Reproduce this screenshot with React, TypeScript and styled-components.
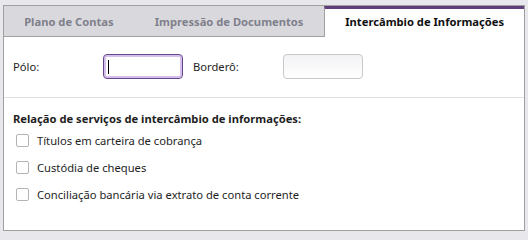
import styled, { createGlobalStyle } from "styled-components";

const GlobalStyle = createGlobalStyle`
    html, body {
        margin: 0;
        padding: 0;
        background: #e8e8ec;
        font-family: "Noto Sans", "Open Sans", sans-serif;
        font-size: 11.2px;
        color: #1e1e1e;
    }
`;

const Page = styled.div`
    padding: 5px 3px 6px 3px;
`;

const Panel = styled.div`
    width: 520px;
    height: 224px;
    border: 1px solid #a0a0a0;
    background: #ffffff;
    display: flex;
    flex-direction: column;
`;

const TabStrip = styled.div`
    display: flex;
    height: 30px;
    background: #d9d9dd;
    border-bottom: 1px solid #a0a0a0;
`;

const Tab = styled.div<{ $active?: boolean; $width: number }>`
    width: ${(p) => p.$width}px;
    box-sizing: border-box;
    display: flex;
    align-items: center;
    justify-content: center;
    font-weight: 700;
    font-size: 11.2px;
    color: ${(p) => (p.$active ? "#111111" : "#80808c")};
    background: ${(p) => (p.$active ? "#ffffff" : "transparent")};
    border-top: 3px solid ${(p) => (p.$active ? "#5e3f7c" : "transparent")};
    border-left: ${(p) => (p.$active ? "1px solid #a0a0a0" : "none")};
    margin-bottom: ${(p) => (p.$active ? "-1px" : "0")};
    height: ${(p) => (p.$active ? "31px" : "30px")};
    padding-bottom: 3px;
`;

const FieldRow = styled.div`
    display: flex;
    align-items: center;
    padding: 17px 9px 18px 9px;
    border-bottom: 1px solid #e2e2e6;
`;

const FieldLabel = styled.label<{ $width: number }>`
    width: ${(p) => p.$width}px;
`;

const InputWrap = styled.div`
    position: relative;
    margin-right: 10px;
`;

const TextInput = styled.input<{ $focused?: boolean }>`
    display: block;
    width: 80px;
    height: 25px;
    box-sizing: border-box;
    border-radius: 4px;
    font: inherit;
    outline: none;
    padding: 0 4px;
    border: 1px solid ${(p) => (p.$focused ? "#65478a" : "#c8c8cc")};
    box-shadow: ${(p) => (p.$focused ? "inset 0 0 0 2px #d4c0ea" : "none")};
    background: ${(p) => (p.$focused ? "#ffffff" : "linear-gradient(#f3f3f5, #ffffff)")};
`;

const Caret = styled.span`
    position: absolute;
    left: 5px;
    top: 6px;
    width: 1px;
    height: 14px;
    background: #000000;
`;

const Section = styled.div`
    padding: 11px 9px 0 9px;
`;

const SectionTitle = styled.div`
    font-weight: 700;
    height: 20px;
    line-height: 20px;
`;

const CheckList = styled.div`
    display: flex;
    flex-direction: column;
    gap: 11px;
    padding-top: 3px;
`;

const CheckRow = styled.label`
    display: flex;
    align-items: center;
    height: 16px;
    padding-left: 3px;
`;

const Box = styled.span`
    width: 13px;
    height: 13px;
    box-sizing: border-box;
    border: 1px solid #b4b4b8;
    border-radius: 2px;
    background: #ffffff;
    margin-right: 8px;
`;

export default function App() {
    const services = [
        "Títulos em carteira de cobrança",
        "Custódia de cheques",
        "Conciliação bancária via extrato de conta corrente",
    ];
    return (
        <>
            <GlobalStyle/>
            <Page>
                <Panel>
                    <TabStrip>
                        <Tab $width={130}>Plano de Contas</Tab>
                        <Tab $width={191}>Impressão de Documentos</Tab>
                        <Tab $width={200} $active>Intercâmbio de Informações</Tab>
                    </TabStrip>
                    <FieldRow>
                        <FieldLabel $width={90}>Pólo:</FieldLabel>
                        <InputWrap>
                            <TextInput $focused/>
                            <Caret/>
                        </InputWrap>
                        <FieldLabel $width={90}>Borderô:</FieldLabel>
                        <InputWrap>
                            <TextInput/>
                        </InputWrap>
                    </FieldRow>
                    <Section>
                        <SectionTitle>Relação de serviços de intercâmbio de informações:</SectionTitle>
                        <CheckList>
                            {services.map((s) => (
                                <CheckRow key={s}>
                                    <Box/>
                                    {s}
                                </CheckRow>
                            ))}
                        </CheckList>
                    </Section>
                </Panel>
            </Page>
        </>
    );
}
